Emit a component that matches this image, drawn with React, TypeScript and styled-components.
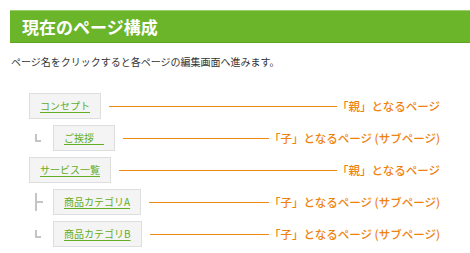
import React from "react";
import styled, { createGlobalStyle } from "styled-components";

const Global = createGlobalStyle`
  html, body { margin: 0; padding: 0; background: #fff; }
  body { font-family: "Noto Sans CJK JP", "Noto Sans", sans-serif; color: #333; }
`;

const Page = styled.div`
  width: 470px;
  height: 253px;
  overflow: hidden;
  padding: 10px 0 0 10px;
  box-sizing: border-box;
`;

const Header = styled.h1`
  margin: 0;
  height: 33px;
  box-sizing: border-box;
  display: flex;
  align-items: center;
  padding-left: 12px;
  background: #6bb52b;
  border-top: 1px solid #9ccd6f;
  border-bottom: 1px solid #5fa423;
  color: #fff;
  font-size: 17px;
  font-weight: 700;
`;

const Lead = styled.p`
  margin: 12px 0 0 1px;
  font-size: 10px;
  line-height: 14px;
  color: #333;
`;

const Tree = styled.div`
  margin-top: 24px;
  display: flex;
  flex-direction: column;
  gap: 6px;
  padding-right: 30px;
`;

const Row = styled.div<{ $child?: boolean }>`
  display: flex;
  align-items: center;
  height: 26px;
  padding-left: ${(p) => (p.$child ? "25px" : "19px")};
`;

const Connector = styled.span<{ $kind: "tee" | "end" }>`
  position: relative;
  width: 18px;
  height: 26px;
  flex: none;
  &::before {
    content: "";
    position: absolute;
    left: 0;
    top: ${(p) => (p.$kind === "tee" ? "4px" : "9px")};
    height: ${(p) => (p.$kind === "tee" ? "18px" : "8px")};
    width: 2px;
    background: #c4c4c4;
  }
  &::after {
    content: "";
    position: absolute;
    left: 0;
    top: ${(p) => (p.$kind === "tee" ? "12px" : "15px")};
    width: ${(p) => (p.$kind === "tee" ? "8px" : "6px")};
    height: 2px;
    background: #c4c4c4;
  }
`;

const Box = styled.div<{ $w?: number }>`
  flex: none;
  height: 26px;
  box-sizing: border-box;
  ${(p) => (p.$w ? `width: ${p.$w}px;` : "")}
  display: flex;
  align-items: center;
  padding: 0 10px;
  background: #f4f4f4;
  border: 1px solid #dedede;
`;

const PageLink = styled.a`
  font-size: 10px;
  line-height: 12px;
  color: #62ad24;
  text-decoration: underline;
  text-underline-offset: 2px;
  white-space: pre;
  cursor: pointer;
`;

const Line = styled.span`
  flex: 1;
  height: 1px;
  background: #f08a10;
  margin-left: 8px;
`;

const Label = styled.span`
  flex: none;
  font-size: 11.5px;
  font-weight: 500;
  color: #f0820f;
  white-space: pre;
`;

type Item = { name: string; level: 0 | 1; kind?: "tee" | "end" };

const items: Item[] = [
  { name: "コンセプト", level: 0 },
  { name: "ご挨拶\u3000", level: 1, kind: "end" },
  { name: "サービス一覧", level: 0 },
  { name: "商品カテゴリA", level: 1, kind: "tee" },
  { name: "商品カテゴリB", level: 1, kind: "end" },
];

export default function App() {
  return (
    <>
      <Global />
      <Page>
        <Header>現在のページ構成</Header>
        <Lead>ページ名をクリックすると各ページの編集画面へ進みます。</Lead>
        <Tree>
          {items.map((it, i) => (
            <Row key={i} $child={it.level === 1}>
              {it.level === 1 && <Connector $kind={it.kind || "end"} />}
              <Box>
                <PageLink>{it.name}</PageLink>
              </Box>
              <Line />
              <Label>
                {it.level === 0
                  ? "「親」となるページ"
                  : "「子」となるページ (サブページ)"}
              </Label>
            </Row>
          ))}
          <Row $child>
            <Connector $kind="end" />
            <Box $w={90} />
          </Row>
        </Tree>
      </Page>
    </>
  );
}
